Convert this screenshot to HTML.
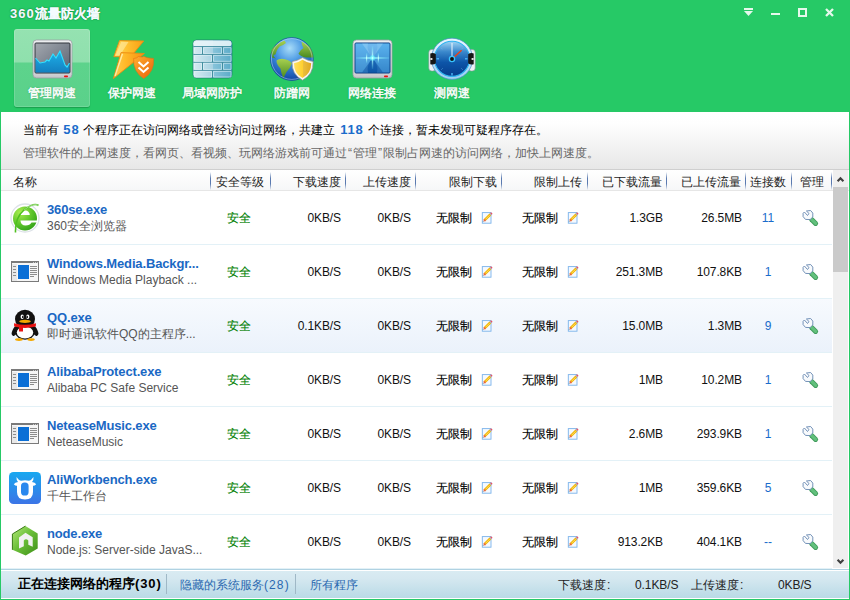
<!DOCTYPE html>
<html><head><meta charset="utf-8">
<style>
*{margin:0;padding:0;box-sizing:border-box}
html,body{width:850px;height:600px;overflow:hidden}
body{background:#26c966;font-family:"Liberation Sans",sans-serif;font-size:12px;color:#222;position:relative}
.a{position:absolute;white-space:nowrap}
#title{left:10px;top:5px;font-size:13px;font-weight:bold;color:#f4fbff;line-height:18px;-webkit-text-stroke:.1px #f4fbff;text-shadow:0 0 1.5px #0e7a36,0 0 1px #0e7a36}
.tab{position:absolute;top:29px;width:76px;height:78px}
.tab.sel{border-radius:3px;background:linear-gradient(#95e2b1 0,#8fe0ad 33px,#5dd38c 34px,#5ad18a 100%);box-shadow:0 1px 1px rgba(0,80,30,.35),inset 0 0 0 1px rgba(255,255,255,.14)}
.tab .lbl{position:absolute;left:0;right:0;top:56px;text-align:center;color:#fff;font-size:12px;line-height:16px;-webkit-text-stroke:.45px #fff;text-shadow:0 0 1.5px rgba(10,110,50,.8)}
.tab svg{position:absolute;left:14px;top:8px}
#content{position:absolute;left:1px;top:112px;width:848px;height:487px;background:#fff}
#info{position:absolute;left:0;top:0;width:848px;height:57px;background:linear-gradient(#fff 0,#fefefe 12px,#e7e7e7 57px)}
#hdr{position:absolute;left:0;top:57px;width:848px;height:22px;border-top:1px solid #cfcfcf;background:linear-gradient(#fff,#f6f7f8);border-bottom:1px solid #e6e6e6}
.hc{position:absolute;top:5px;color:#222;line-height:14px}
.sep{position:absolute;top:2px;width:1px;height:18px;background:linear-gradient(rgba(90,122,176,0),#5a7ab0 35%,#5a7ab0 65%,rgba(90,122,176,0))}
.row{position:absolute;left:0;width:831px;height:54px;border-bottom:1px solid #e3f1f7}
.row.hl{background:linear-gradient(#f7fafe,#ebf2fb)}
.nm{position:absolute;left:46px;top:11px;font-weight:bold;font-size:13px;color:#1a68c4;line-height:16px;letter-spacing:-.15px}
.ds{position:absolute;left:46px;top:27px;color:#555;line-height:16px}
.c{position:absolute;top:19px;line-height:16px;color:#000;-webkit-text-stroke-width:.15px}
.ok{color:#008000;-webkit-text-stroke-width:.1px}
.r{text-align:right}
.bn{display:inline-block;text-align:center;color:#1a6ccb;font-size:13px;letter-spacing:.8px;text-indent:.8px}
.q{display:inline-block;width:6px;font-style:normal;text-align:center}
.num{letter-spacing:-0.1px;-webkit-text-stroke-width:0;color:#111}
#status{position:absolute;left:0;top:457px;width:848px;height:29px;border-top:1px solid #b0d2e2;box-shadow:inset 0 1px #fff;background:linear-gradient(#fff 0,#fff 1px,#d9ebf2 1px,#d5e8f0 30%,#b9dae6 100%)}
</style></head><body>
<svg width="0" height="0" style="position:absolute">
<defs>
 <radialGradient id="gie" cx=".3" cy=".25" r=".9"><stop offset="0" stop-color="#a8ec50"/><stop offset=".55" stop-color="#5cc42a"/><stop offset="1" stop-color="#2a9a14"/></radialGradient>
 <linearGradient id="gali" x1="0" y1="0" x2="0" y2="1"><stop offset="0" stop-color="#18a8f0"/><stop offset="1" stop-color="#3c74e6"/></linearGradient>
 <linearGradient id="gnode" x1="0" y1="0" x2="1" y2="1"><stop offset="0" stop-color="#b4e878"/><stop offset=".45" stop-color="#6cc03a"/><stop offset="1" stop-color="#3e9018"/></linearGradient>
 <linearGradient id="gpen" x1="0" y1="0" x2="1" y2="0"><stop offset="0" stop-color="#ffe060"/><stop offset="1" stop-color="#e8a800"/></linearGradient>
 <symbol id="s-ie" viewBox="0 0 30 30">
  <circle cx="15" cy="15" r="14" fill="none" stroke="#dde2e8" stroke-width="1.3"/>
  <circle cx="15" cy="15.5" r="12" fill="url(#gie)"/>
  <path d="M10.4 12 Q10.8 7.4 15 7.4 Q19.4 7.4 19.8 12 Z" fill="#fff"/>
  <path d="M10.4 17.4 H27.5 V19.6 H21.5 Q20 22.6 15.5 22.6 Q11 22.4 10.4 17.4 Z" fill="#fff"/>
  <path d="M28.5 2.5 Q24 -1 14 7 Q5 14.5 5.5 29.5" fill="none" stroke="#50c020" stroke-width="1.6"/>
  <path d="M28.5 2.5 Q24 -1 14 7" fill="none" stroke="#fff" stroke-width=".6" opacity=".7"/>
 </symbol>
 <symbol id="s-win" viewBox="0 0 28 21" shape-rendering="crispEdges">
  <rect x="0" y="0" width="28" height="21" fill="#7a7a7a"/>
  <rect x="1" y="2" width="26" height="18" fill="#f6f6f6"/>
  <rect x="1" y="3" width="5" height="17" fill="#e8e8e8"/>
  <rect x="7" y="4" width="11" height="14" fill="#0b6fd6"/>
  <g fill="#8c8c8c"><rect x="2" y="5" width="3" height="1"/><rect x="2" y="8" width="3" height="1"/><rect x="2" y="11" width="3" height="1"/><rect x="2" y="14" width="3" height="1"/>
  <rect x="19" y="5" width="7" height="1"/><rect x="19" y="7" width="7" height="1"/><rect x="19" y="9" width="7" height="1"/><rect x="19" y="11" width="7" height="1"/><rect x="19" y="13" width="7" height="1"/><rect x="19" y="15" width="4" height="1"/></g>
  <g fill="#c8c8c8"><rect x="22" y="1" width="1" height="1"/><rect x="24" y="1" width="1" height="1"/><rect x="26" y="1" width="1" height="1"/></g>
 </symbol>
 <symbol id="s-qq" viewBox="0 0 28 32">
  <ellipse cx="4" cy="22" rx="2.6" ry="5.2" transform="rotate(25 4 22)" fill="#111"/>
  <ellipse cx="24" cy="22" rx="2.6" ry="5.2" transform="rotate(-25 24 22)" fill="#111"/>
  <ellipse cx="14" cy="10" rx="10" ry="9.3" fill="#111"/>
  <ellipse cx="14" cy="22.5" rx="10" ry="8.3" fill="#111"/>
  <ellipse cx="14" cy="23.6" rx="8.2" ry="6" fill="#fff"/>
  <ellipse cx="11.2" cy="7.7" rx="1.6" ry="2.3" fill="#fff"/><ellipse cx="16.8" cy="7.7" rx="1.6" ry="2.3" fill="#fff"/>
  <ellipse cx="11.8" cy="7.9" rx=".8" ry="1.2" fill="#111"/><ellipse cx="16.2" cy="7.9" rx=".8" ry="1.2" fill="#111"/>
  <ellipse cx="14" cy="12.4" rx="5.8" ry="1.6" fill="#f4a800"/>
  <path d="M3 14.2 Q14 17.5 25 14.2 L24.8 17.6 Q14 20.3 3.2 17.6 Z" fill="#e81212"/>
  <rect x="8" y="17" width="4" height="5.5" fill="#e81212"/>
  <ellipse cx="8" cy="30.6" rx="4" ry="1.3" fill="#f4a800"/><ellipse cx="20" cy="30.6" rx="3.8" ry="1.3" fill="#f4a800"/>
 </symbol>
 <symbol id="s-ali" viewBox="0 0 32 32">
  <rect x="0" y="0" width="32" height="32" rx="4.5" fill="url(#gali)"/>
  <path d="M7.5 5 Q7.2 8.5 9 10 Q6 10.3 4.8 12.2 Q6.5 14 8 13.8 L8 20 Q8 27.5 16 27.5 Q24 27.5 24 20 L24 13.8 Q25.5 14 27.2 12.2 Q26 10.3 23 10 Q24.8 8.5 24.5 5 Q22.5 8.2 20 8.8 Q16 7.6 12 8.8 Q9.5 8.2 7.5 5 Z" fill="#fff"/>
  <rect x="12" y="10.5" width="7.6" height="13" rx="3.6" fill="#2a88ee"/>
 </symbol>
 <symbol id="s-node" viewBox="0 0 28 32">
  <path d="M14.4 1.1 L26.7 8.4 V23.6 L14.7 30.5 L1.4 24.8 V9 Z" fill="url(#gnode)"/>
  <path d="M1.4 24.8 V9 L14.4 1.1" fill="none" stroke="#3a7a18" stroke-width="1"/>
  <path d="M8 12.5 L14.5 7.8 L21.7 12.2 V21.7 L17.3 19.8 V15.5 Q15 13 12.8 15.5 V21.2 L8 23.6 Z" fill="#f2f2f2"/>
 </symbol>
 <symbol id="s-ed" viewBox="0 0 12 12">
  <rect x="1.3" y=".6" width="8.7" height="10.6" fill="#f4f9ff" stroke="#7ab2ea" stroke-width=".9"/>
  <path d="M3.6 8.2 L9.3 2.5" stroke="#f2b400" stroke-width="2.5"/>
  <path d="M4.5 7.3 L8.6 3.2" stroke="#ffe680" stroke-width=".8"/>
  <path d="M3 8.8 L4.2 7.6" stroke="#f07048" stroke-width="2.5"/>
  <path d="M9.1 2.7 L9.9 1.9" stroke="#a8b0b8" stroke-width="2.4"/>
  <path d="M9.9 1.9 L10.8 1" stroke="#e85060" stroke-width="2.2"/>
  <path d="M2.4 9.4 L2.9 8.9" stroke="#333" stroke-width="1"/>
 </symbol>
 <symbol id="s-wr" viewBox="802 209 18 18">
  <path d="M811.6 219.4 L815.6 223.4" stroke="#3f9a5a" stroke-width="5" stroke-linecap="round"/>
  <path d="M811.6 219.4 L815.6 223.4" stroke="#62c07c" stroke-width="3.2" stroke-linecap="round"/>
  <path d="M806.4 211 L810.6 210.5 L812.8 213.1 L812.8 217 L810.1 219.6 L805.5 219.4 L803.1 216.6 L803.1 213.3 L804.4 212 L807.5 215.5 L809 213.5 Z" fill="#f8fafc" stroke="#6d8cb4" stroke-width=".95" stroke-linejoin="round"/>
 </symbol>
</defs>
</svg>

<div class="a" id="title"><span style="letter-spacing:1px">360</span>流量防火墙</div>
<!-- window controls -->
<svg class="a" style="left:740px;top:4px" width="100" height="18" viewBox="0 0 100 18">
 <g fill="#e6f8ec">
  <rect x="4" y="4" width="9" height="2"/>
  <path d="M4 7 H13 L8.5 12 Z"/>
  <rect x="31" y="9" width="9" height="2"/>
 </g>
 <rect x="59" y="5" width="7" height="7" fill="none" stroke="#e6f8ec" stroke-width="2"/>
 <path d="M86 5 L93 12 M93 5 L86 12" stroke="#e6f8ec" stroke-width="2.3"/>
</svg>

<svg class="a" style="left:0;top:0;z-index:2" width="500" height="110" viewBox="0 0 500 110">
<defs>
 <linearGradient id="gfr" x1="0" y1="0" x2="0" y2="1"><stop offset="0" stop-color="#eeeff1"/><stop offset=".85" stop-color="#d5d7da"/><stop offset="1" stop-color="#c2c4c8"/></linearGradient>
 <linearGradient id="gsc" x1="0" y1="0" x2="1" y2="1"><stop offset="0" stop-color="#a4a9b0"/><stop offset="1" stop-color="#596170"/></linearGradient>
 <linearGradient id="gch" x1="0" y1="0" x2="0" y2="1"><stop offset="0" stop-color="#1fb0e8"/><stop offset="1" stop-color="#1380c0"/></linearGradient>
 <linearGradient id="gsc2" x1="0" y1="0" x2="0" y2="1"><stop offset="0" stop-color="#4aa8ec"/><stop offset="1" stop-color="#1062b4"/></linearGradient>
 <linearGradient id="ghl" x1="0" y1="0" x2="1" y2="0"><stop offset="0" stop-color="#8ff" stop-opacity=".15"/><stop offset=".5" stop-color="#aff" stop-opacity=".9"/><stop offset="1" stop-color="#8ff" stop-opacity=".15"/></linearGradient>
 <linearGradient id="gvl" x1="0" y1="0" x2="0" y2="1"><stop offset="0" stop-color="#8ff" stop-opacity=".1"/><stop offset=".5" stop-color="#cff"/><stop offset="1" stop-color="#8ff" stop-opacity=".1"/></linearGradient>
 <radialGradient id="glow" cx=".5" cy=".5" r=".5"><stop offset="0" stop-color="#fff"/><stop offset=".3" stop-color="#8ff"/><stop offset="1" stop-color="#4ef" stop-opacity="0"/></radialGradient>
 <linearGradient id="gbolt" x1="0" y1="0" x2="1" y2="0"><stop offset="0" stop-color="#ffd860"/><stop offset=".45" stop-color="#ffc030"/><stop offset="1" stop-color="#f7a014"/></linearGradient>
 <linearGradient id="gbolt2" x1="0" y1="0" x2="1" y2="0"><stop offset="0" stop-color="#ffd050"/><stop offset=".4" stop-color="#ffb828"/><stop offset="1" stop-color="#f59010"/></linearGradient>
 <linearGradient id="gshd" x1="0" y1="0" x2="1" y2="1"><stop offset="0" stop-color="#ffb030"/><stop offset="1" stop-color="#e8600a"/></linearGradient>
 <linearGradient id="gwall" x1="0" y1="0" x2="1" y2="0"><stop offset="0" stop-color="#d8ecf2"/><stop offset=".5" stop-color="#a8d2e2"/><stop offset=".5" stop-color="#88c4da"/><stop offset="1" stop-color="#5aaac8"/></linearGradient>
 <radialGradient id="gglobe" cx=".45" cy=".25" r=".8"><stop offset="0" stop-color="#a8dcf8"/><stop offset=".45" stop-color="#3c8ee0"/><stop offset="1" stop-color="#0c3c9c"/></radialGradient>
 <linearGradient id="gland" x1="0" y1="0" x2="0" y2="1"><stop offset="0" stop-color="#a8d050"/><stop offset="1" stop-color="#4a8a20"/></linearGradient>
 <linearGradient id="gys" x1="0" y1="0" x2="1" y2="0"><stop offset="0" stop-color="#ffe060"/><stop offset=".5" stop-color="#ffd030"/><stop offset=".5" stop-color="#ecc040"/><stop offset="1" stop-color="#e0a820"/></linearGradient>
 <linearGradient id="gdial" x1="0" y1="0" x2="0" y2="1"><stop offset="0" stop-color="#a0d4f4"/><stop offset=".3" stop-color="#3a88cc"/><stop offset=".6" stop-color="#0d55a8"/><stop offset="1" stop-color="#063c8c"/></linearGradient>
 <linearGradient id="gring" x1="0" y1="0" x2="0" y2="1"><stop offset="0" stop-color="#eaf6ff"/><stop offset="1" stop-color="#9ccff2"/></linearGradient>
</defs>
<!-- monitor 1 -->
<rect x="33" y="40" width="39" height="38" rx="3.5" fill="url(#gfr)" stroke="#9a9ea4" stroke-width=".8"/>
<rect x="35" y="43" width="35" height="30" rx="1" fill="url(#gsc)" stroke="#30343c" stroke-width="1"/>
<path d="M35.5 58 L40 63 L45 62 L47 60 L49 61 L53 54 L56 58 L60 51 L65 65 L67 67 L69.5 63 V72.5 H35.5 Z" fill="url(#gch)"/>
<path d="M35.5 58 L40 63 L45 62 L47 60 L49 61 L53 54 L56 58 L60 51 L65 65 L67 67 L69.5 63" fill="none" stroke="#30e0ff" stroke-width="1.1"/>
<rect x="64" y="75.6" width="4" height="1.6" rx=".8" fill="#e81010"/>
<!-- monitor 2 -->
<rect x="353" y="40" width="39" height="38" rx="3.5" fill="url(#gfr)" stroke="#9a9ea4" stroke-width=".8"/>
<rect x="355" y="43" width="35" height="30" rx="1" fill="url(#gsc2)" stroke="#0c3c80" stroke-width="1"/>
<path d="M355.5 43.5 H368 Q366 50 372.5 58 Q366 66 368 72.5 H355.5 Z" fill="#7cc8f4" opacity=".45"/>
<path d="M389.5 43.5 H377 Q379 50 372.5 58 Q379 66 377 72.5 H389.5 Z" fill="#7cc8f4" opacity=".35"/>
<path d="M362 43.5 H383 L372.5 58 Z" fill="#b8e0f8" opacity=".35"/>
<path d="M362 72.5 H383 L372.5 58 Z" fill="#0a4a98" opacity=".45"/>
<rect x="356" y="57.2" width="33" height="1.6" fill="url(#ghl)"/>
<rect x="371.8" y="46" width="1.4" height="23" fill="url(#gvl)"/>
<rect x="366" y="53" width="1.2" height="10" fill="url(#gvl)"/>
<rect x="377.8" y="53" width="1.2" height="10" fill="url(#gvl)"/>
<circle cx="372.5" cy="58" r="3.5" fill="url(#glow)"/>
<rect x="384" y="75.6" width="4" height="1.6" rx=".8" fill="#e81010"/>
<!-- bolt -->
<path d="M119.5 40.6 L143.7 41 L133.7 53.3 L121.5 56.7 L113.8 56.7 Z" fill="url(#gbolt)" stroke="#ec8a12" stroke-width=".9" stroke-linejoin="round"/>
<path d="M121.2 41.8 L128.5 41.9 L119.8 55.6 L115.6 55.6 Z" fill="#fff0b0" opacity=".55"/>
<path d="M121 52.6 L144.4 53.5 L113.4 78.6 Z" fill="url(#gbolt2)" stroke="#ec8a12" stroke-width=".9" stroke-linejoin="round"/>
<path d="M122.5 53.8 L115 76" stroke="#fff6c8" stroke-width="1.4" opacity=".75"/>
<path d="M138.5 56.5 Q143.5 57.5 143.7 56.3 Q146 58 153.6 58.5 Q154.5 72 143.7 78.6 Q133 72 133.6 58.5 Q137 58.3 138.5 56.5 Z" fill="url(#gshd)" stroke="#e07010" stroke-width=".6"/>
<path d="M138.5 62 L143.5 66.5 L148.5 62 M138.5 67.5 L143.5 72 L148.5 67.5" fill="none" stroke="#fff" stroke-width="2"/>
<!-- wall -->
<rect x="193" y="40" width="39" height="38" rx="3.5" fill="url(#gwall)" stroke="#1a6a70" stroke-width=".6"/>
<rect x="193.5" y="40.5" width="38" height="6" rx="3" fill="#e8f4f8" opacity=".9"/>
<g stroke="#3d8a9c" stroke-width=".95">
 <path d="M193.3 46.6 H231.7 M193.3 54.4 H231.7 M193.3 62.3 H231.7 M193.3 70.4 H231.7"/>
 <path d="M202.5 46.6 V54.4 M222.5 46.6 V54.4 M212.5 54.4 V62.3 M202.5 62.3 V70.4 M222.5 62.3 V70.4 M212.5 70.4 V78"/>
</g>
<g fill="none" stroke="#e8f6fa" stroke-width=".7" opacity=".8">
 <path d="M194.5 47.6 H201.5 V53.4 H194.5 Z M203.5 47.6 H221.5 V53.4 H203.5 Z M223.5 47.6 H231 V53.4 H223.5Z M194.5 55.4 H211.5 V61.3 H194.5Z M213.5 55.4 H231 V61.3 H213.5Z"/>
 <path d="M194.5 63.3 H201.5 V69.4 H194.5 Z M203.5 63.3 H221.5 V69.4 H203.5 Z M223.5 63.3 H231 V69.4 H223.5Z M194.5 71.4 H211.5 V77 H194.5Z M213.5 71.4 H231 V77 H213.5Z"/>
</g>
<!-- globe -->
<circle cx="291.8" cy="59" r="21.4" fill="url(#gglobe)" stroke="#1a48a0" stroke-width=".7"/>
<path d="M276.5 60.5 Q279.5 58 285 59.2 Q290.5 60.5 292 63.5 Q290 68.5 286.5 72 Q284.5 76 283.3 78 Q281 73 280.5 68.5 Q276.5 64.5 276.5 60.5 Z" fill="url(#gland)"/>
<path d="M271.5 50 Q276 43.5 284.5 40.5 L286 43 Q283 45.5 279.5 46.5 Q276.5 49.5 275.5 54.5 L273.5 55 Q273.5 57.5 276 58.5 L272 57.5 Q271 53 271.5 50 Z" fill="url(#gland)"/>
<path d="M301.5 41.5 Q306.5 43.5 309.5 47 Q313 51.5 313.3 57.5 L306 57.5 Q300.5 56.5 298.5 53.5 Q300 50 303.5 48 Q301.5 45 301.5 41.5 Z" fill="url(#gland)"/>
<circle cx="291.8" cy="59" r="20.4" fill="none" stroke="#d8f0ff" stroke-width=".8" opacity=".55"/>
<path d="M292 61.6 Q297.5 60.8 302.5 57.6 Q307.8 60.8 313.2 61.6 Q313.6 74.5 302.5 80.2 Q291.4 74.5 292 61.6 Z" fill="#f6f6f6" stroke="#8c8c8c" stroke-width=".7"/>
<path d="M294 63.2 Q298.5 62.5 302.5 59.8 Q306.5 62.5 311.2 63.2 Q311.2 73.5 302.5 77.9 Q293.8 73.5 294 63.2 Z" fill="url(#gys)"/>
<!-- clock -->
<rect x="428.8" y="49.5" width="7" height="21.5" rx="3" fill="#eef2f5" stroke="#8c949c" stroke-width=".6"/>
<rect x="468.2" y="49.5" width="7" height="21.5" rx="3" fill="#eef2f5" stroke="#8c949c" stroke-width=".6"/>
<circle cx="452" cy="58.8" r="20.6" fill="url(#gring)" stroke="#4a8cc8" stroke-width=".7"/>
<circle cx="452" cy="58.8" r="17.6" fill="url(#gdial)" stroke="#30b4f0" stroke-width="1.1"/>
<path d="M430.3 53.5 Q433 52.5 435.8 54 V63.6 Q433 65.2 430.3 64.2 Z" fill="#161616"/>
<path d="M473.7 53.5 Q471 52.5 468.2 54 V63.6 Q471 65.2 473.7 64.2 Z" fill="#161616"/>
<rect x="430.4" y="58" width="2" height="2" fill="#e0e0e0"/><rect x="471.6" y="58" width="2" height="2" fill="#e0e0e0"/>
<g stroke="#48b0f0" stroke-width="1.5">
 <path d="M452 73 V75.5 M436.5 58.8 H439 M465 58.8 H467.5"/>
</g>
<g stroke="#6cc0f0" stroke-width=".9" opacity=".8">
 <path d="M441.5 48.3 L442.5 49.3 M462.5 48.3 L461.5 49.3 M441.5 69.5 L442.5 68.5 M462.5 69.5 L461.5 68.5"/>
</g>
<path d="M452 59 V43" stroke="#fff" stroke-width=".9"/>
<path d="M452 59 L461.6 50.2" stroke="#f04010" stroke-width="1.3"/>
<circle cx="452" cy="59" r="2.6" fill="#111" stroke="#38c4ff" stroke-width="1.3"/>
</svg>

<div class="tab sel" style="left:14px"><div class="lbl">管理网速</div></div>
<div class="tab" style="left:94px"><div class="lbl">保护网速</div></div>
<div class="tab" style="left:174px"><div class="lbl">局域网防护</div></div>
<div class="tab" style="left:254px"><div class="lbl">防蹭网</div></div>
<div class="tab" style="left:334px"><div class="lbl">网络连接</div></div>
<div class="tab" style="left:414px"><div class="lbl">测网速</div></div>

<div id="content">
 <div id="info">
  <div class="a" style="left:22px;top:10px;line-height:16px;color:#000">当前有<b class="bn" style="width:24px">58</b>个程序正在访问网络或曾经访问过网络，共建立<b class="bn" style="width:33px">118</b>个连接，暂未发现可疑程序存在。</div>
  <div class="a" style="left:22px;top:33px;line-height:16px;color:#666">管理软件的上网速度，看网页、看视频、玩网络游戏前可通过<i class="q">“</i>管理<i class="q">”</i>限制占网速的访问网络，加快上网速度。</div>
 </div>
 <div id="hdr">
  <div class="hc" style="left:12px">名称</div>
  <div class="sep" style="left:209px"></div>
  <div class="hc" style="left:215px">安全等级</div>
  <div class="sep" style="left:269px"></div>
  <div class="hc" style="left:292px">下载速度</div>
  <div class="sep" style="left:344px"></div>
  <div class="hc" style="left:362px">上传速度</div>
  <div class="sep" style="left:414px"></div>
  <div class="hc" style="left:448px">限制下载</div>
  <div class="sep" style="left:500px"></div>
  <div class="hc" style="left:533px">限制上传</div>
  <div class="sep" style="left:586px"></div>
  <div class="hc" style="left:601px">已下载流量</div>
  <div class="sep" style="left:665px"></div>
  <div class="hc" style="left:680px">已上传流量</div>
  <div class="sep" style="left:744px"></div>
  <div class="hc" style="left:749px">连接数</div>
  <div class="sep" style="left:790px"></div>
  <div class="hc" style="left:799px">管理</div>
  <div class="sep" style="left:830px"></div>
 </div>
 <div id="rows">
<div class="row" style="top:79px">
 <svg class="a" style="left:9px;top:12px;width:30px;height:30px"><use href="#s-ie"/></svg>
 <div class="nm">360se.exe</div><div class="ds">360安全浏览器</div>
 <div class="c ok" style="left:226px">安全</div>
 <div class="c r num" style="right:491px">0KB/S</div>
 <div class="c r num" style="right:421px">0KB/S</div>
 <div class="c" style="left:435px">无限制</div><svg class="a" style="left:480px;top:21px;width:12px;height:12px"><use href="#s-ed"/></svg>
 <div class="c" style="left:521px">无限制</div><svg class="a" style="left:566px;top:21px;width:12px;height:12px"><use href="#s-ed"/></svg>
 <div class="c r num" style="right:169px">1.3GB</div>
 <div class="c r num" style="right:90px">26.5MB</div>
 <div class="c" style="left:744px;width:46px;text-align:center;color:#1a6ccb;-webkit-text-stroke-width:0">11</div>
 <svg class="a" style="left:801px;top:18px;width:18px;height:18px"><use href="#s-wr"/></svg>
</div>
<div class="row" style="top:133px">
 <svg class="a" style="left:10px;top:16px;width:28px;height:21px"><use href="#s-win"/></svg>
 <div class="nm">Windows.Media.Backgr...</div><div class="ds">Windows Media Playback ...</div>
 <div class="c ok" style="left:226px">安全</div>
 <div class="c r num" style="right:491px">0KB/S</div>
 <div class="c r num" style="right:421px">0KB/S</div>
 <div class="c" style="left:435px">无限制</div><svg class="a" style="left:480px;top:21px;width:12px;height:12px"><use href="#s-ed"/></svg>
 <div class="c" style="left:521px">无限制</div><svg class="a" style="left:566px;top:21px;width:12px;height:12px"><use href="#s-ed"/></svg>
 <div class="c r num" style="right:169px">251.3MB</div>
 <div class="c r num" style="right:90px">107.8KB</div>
 <div class="c" style="left:744px;width:46px;text-align:center;color:#1a6ccb;-webkit-text-stroke-width:0">1</div>
 <svg class="a" style="left:801px;top:18px;width:18px;height:18px"><use href="#s-wr"/></svg>
</div>
<div class="row hl" style="top:187px">
 <svg class="a" style="left:10px;top:10px;width:28px;height:32px"><use href="#s-qq"/></svg>
 <div class="nm">QQ.exe</div><div class="ds">即时通讯软件QQ的主程序...</div>
 <div class="c ok" style="left:226px">安全</div>
 <div class="c r num" style="right:491px">0.1KB/S</div>
 <div class="c r num" style="right:421px">0KB/S</div>
 <div class="c" style="left:435px">无限制</div><svg class="a" style="left:480px;top:21px;width:12px;height:12px"><use href="#s-ed"/></svg>
 <div class="c" style="left:521px">无限制</div><svg class="a" style="left:566px;top:21px;width:12px;height:12px"><use href="#s-ed"/></svg>
 <div class="c r num" style="right:169px">15.0MB</div>
 <div class="c r num" style="right:90px">1.3MB</div>
 <div class="c" style="left:744px;width:46px;text-align:center;color:#1a6ccb;-webkit-text-stroke-width:0">9</div>
 <svg class="a" style="left:801px;top:18px;width:18px;height:18px"><use href="#s-wr"/></svg>
</div>
<div class="row" style="top:241px">
 <svg class="a" style="left:10px;top:16px;width:28px;height:21px"><use href="#s-win"/></svg>
 <div class="nm">AlibabaProtect.exe</div><div class="ds">Alibaba PC Safe Service</div>
 <div class="c ok" style="left:226px">安全</div>
 <div class="c r num" style="right:491px">0KB/S</div>
 <div class="c r num" style="right:421px">0KB/S</div>
 <div class="c" style="left:435px">无限制</div><svg class="a" style="left:480px;top:21px;width:12px;height:12px"><use href="#s-ed"/></svg>
 <div class="c" style="left:521px">无限制</div><svg class="a" style="left:566px;top:21px;width:12px;height:12px"><use href="#s-ed"/></svg>
 <div class="c r num" style="right:169px">1MB</div>
 <div class="c r num" style="right:90px">10.2MB</div>
 <div class="c" style="left:744px;width:46px;text-align:center;color:#1a6ccb;-webkit-text-stroke-width:0">1</div>
 <svg class="a" style="left:801px;top:18px;width:18px;height:18px"><use href="#s-wr"/></svg>
</div>
<div class="row" style="top:295px">
 <svg class="a" style="left:10px;top:16px;width:28px;height:21px"><use href="#s-win"/></svg>
 <div class="nm">NeteaseMusic.exe</div><div class="ds">NeteaseMusic</div>
 <div class="c ok" style="left:226px">安全</div>
 <div class="c r num" style="right:491px">0KB/S</div>
 <div class="c r num" style="right:421px">0KB/S</div>
 <div class="c" style="left:435px">无限制</div><svg class="a" style="left:480px;top:21px;width:12px;height:12px"><use href="#s-ed"/></svg>
 <div class="c" style="left:521px">无限制</div><svg class="a" style="left:566px;top:21px;width:12px;height:12px"><use href="#s-ed"/></svg>
 <div class="c r num" style="right:169px">2.6MB</div>
 <div class="c r num" style="right:90px">293.9KB</div>
 <div class="c" style="left:744px;width:46px;text-align:center;color:#1a6ccb;-webkit-text-stroke-width:0">1</div>
 <svg class="a" style="left:801px;top:18px;width:18px;height:18px"><use href="#s-wr"/></svg>
</div>
<div class="row" style="top:349px">
 <svg class="a" style="left:8px;top:11px;width:32px;height:32px"><use href="#s-ali"/></svg>
 <div class="nm">AliWorkbench.exe</div><div class="ds">千牛工作台</div>
 <div class="c ok" style="left:226px">安全</div>
 <div class="c r num" style="right:491px">0KB/S</div>
 <div class="c r num" style="right:421px">0KB/S</div>
 <div class="c" style="left:435px">无限制</div><svg class="a" style="left:480px;top:21px;width:12px;height:12px"><use href="#s-ed"/></svg>
 <div class="c" style="left:521px">无限制</div><svg class="a" style="left:566px;top:21px;width:12px;height:12px"><use href="#s-ed"/></svg>
 <div class="c r num" style="right:169px">1MB</div>
 <div class="c r num" style="right:90px">359.6KB</div>
 <div class="c" style="left:744px;width:46px;text-align:center;color:#1a6ccb;-webkit-text-stroke-width:0">5</div>
 <svg class="a" style="left:801px;top:18px;width:18px;height:18px"><use href="#s-wr"/></svg>
</div>
<div class="row" style="top:403px">
 <svg class="a" style="left:10px;top:10px;width:28px;height:32px"><use href="#s-node"/></svg>
 <div class="nm">node.exe</div><div class="ds">Node.js: Server-side JavaS...</div>
 <div class="c ok" style="left:226px">安全</div>
 <div class="c r num" style="right:491px">0KB/S</div>
 <div class="c r num" style="right:421px">0KB/S</div>
 <div class="c" style="left:435px">无限制</div><svg class="a" style="left:480px;top:21px;width:12px;height:12px"><use href="#s-ed"/></svg>
 <div class="c" style="left:521px">无限制</div><svg class="a" style="left:566px;top:21px;width:12px;height:12px"><use href="#s-ed"/></svg>
 <div class="c r num" style="right:169px">913.2KB</div>
 <div class="c r num" style="right:90px">404.1KB</div>
 <div class="c" style="left:744px;width:46px;text-align:center;color:#1a6ccb;-webkit-text-stroke-width:0">--</div>
 <svg class="a" style="left:801px;top:18px;width:18px;height:18px"><use href="#s-wr"/></svg>
</div>
</div>
 <!-- scrollbar -->
 <div class="a" style="left:832px;top:58px;width:15px;height:398px;background:#efefef"></div>
 <div class="a" style="left:832px;top:75px;width:15px;height:85px;background:#cacaca"></div>
 <svg class="a" style="left:832px;top:58px" width="15" height="17"><path d="M4.6 11.3 L7.5 8.2 L10.4 11.3" fill="none" stroke="#404040" stroke-width="2.1"/></svg>
 <svg class="a" style="left:832px;top:442px" width="15" height="16"><path d="M4.6 5.7 L7.5 8.8 L10.4 5.7" fill="none" stroke="#404040" stroke-width="2.1"/></svg>
 <div id="status">
  <div class="a" style="left:17px;top:6px;font-weight:bold;color:#000;line-height:16px;font-size:13px">正在连接网络的程序<span style="letter-spacing:.9px">(30)</span></div>
  <div class="a" style="left:165px;top:4px;width:1px;height:20px;background:#9fb8c6"></div>
  <div class="a" style="left:179px;top:7px;color:#2a68b0;line-height:16px">隐藏的系统服务<span style="letter-spacing:1.1px">(28)</span></div>
  <div class="a" style="left:294px;top:4px;width:1px;height:20px;background:#9fb8c6"></div>
  <div class="a" style="left:309px;top:7px;color:#2a68b0;line-height:16px">所有程序</div>
  <div class="a" style="left:557px;top:7px;color:#222;line-height:16px">下载速度<i class="q" style="width:12px;text-align:left;padding-left:1px">:</i></div>
  <div class="a num" style="left:634px;top:7px;color:#222;line-height:16px">0.1KB/S</div>
  <div class="a" style="left:690px;top:7px;color:#222;line-height:16px">上传速度<i class="q" style="width:12px;text-align:left;padding-left:1px">:</i></div>
  <div class="a num" style="left:777px;top:7px;color:#222;line-height:16px">0KB/S</div>
 </div>
</div>
</body></html>
